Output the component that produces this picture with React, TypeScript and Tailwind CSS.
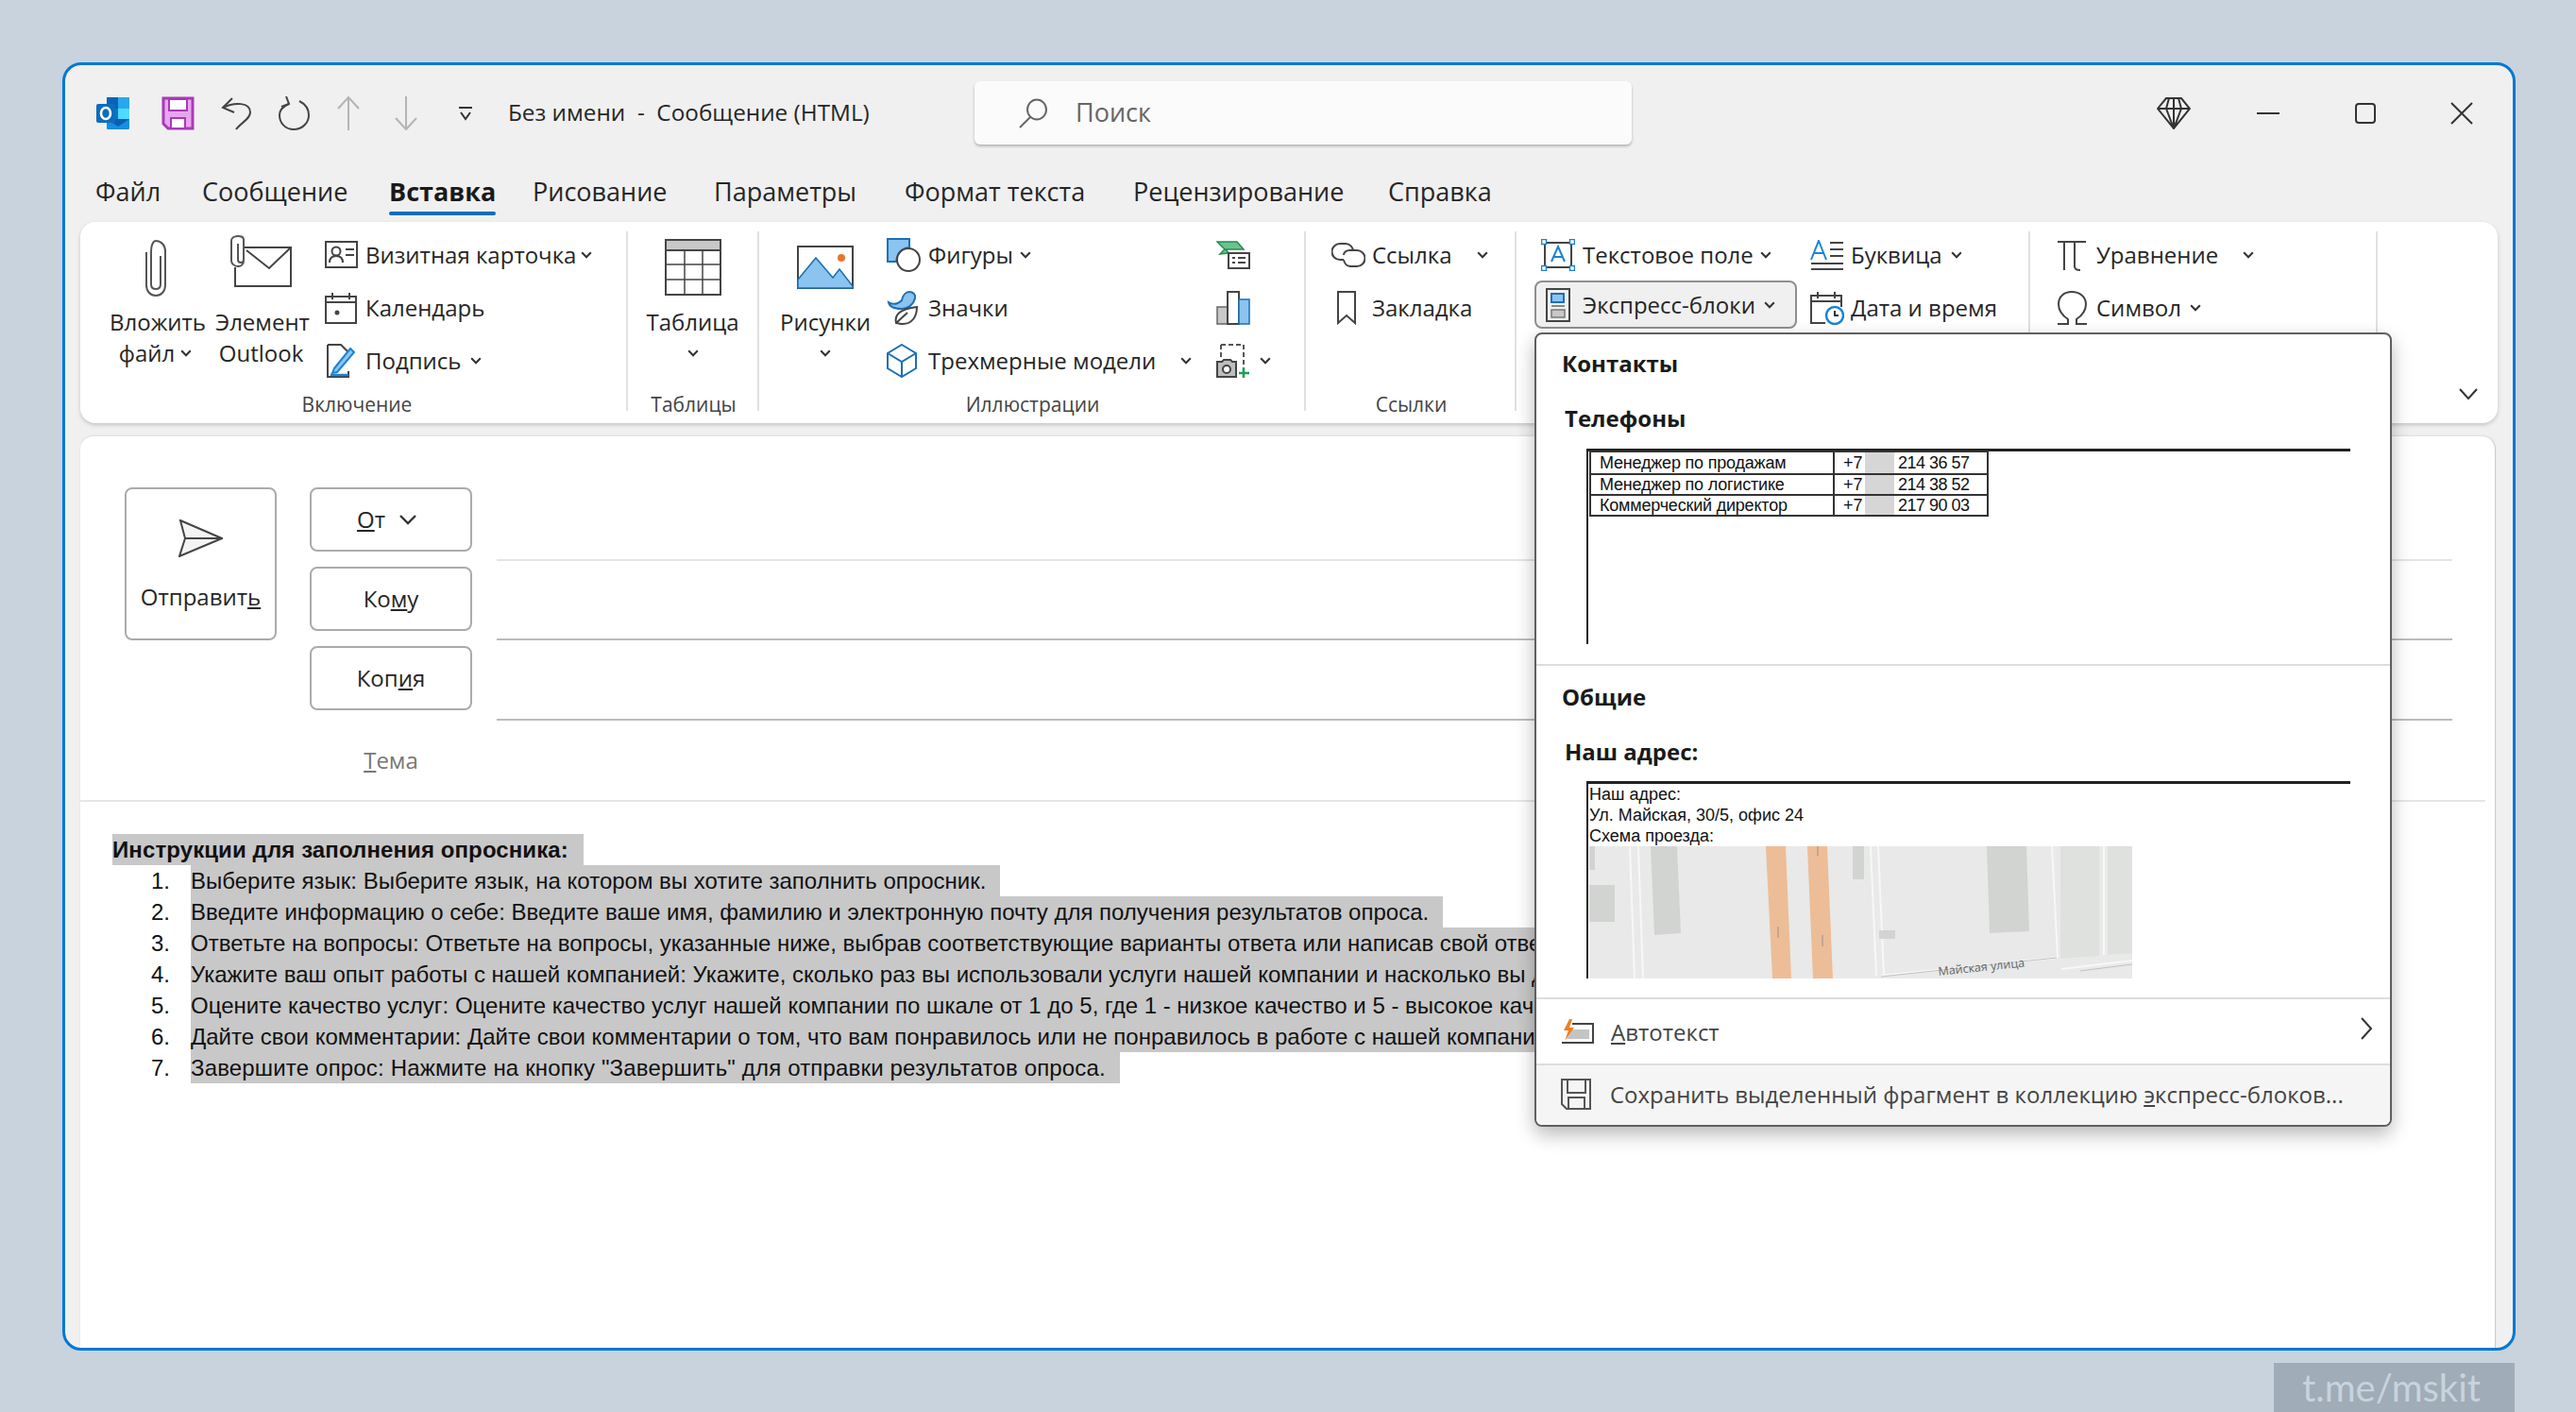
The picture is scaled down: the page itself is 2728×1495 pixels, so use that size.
const FONT = "font-['Open_Sans',sans-serif]";

function Chev({ className = '' }: { className?: string }) {
  return (
    <svg width="12" height="8" viewBox="0 0 12 8" className={`shrink-0 ${className}`} fill="none" stroke="#333" strokeWidth="2">
      <path d="M1.2 1.2 6 6.3l4.8-5.1" />
    </svg>
  );
}

const ic = { fill: 'none', stroke: '#444', strokeWidth: 2 };

const OutlookIcon = () => (
  <svg width="36" height="36" viewBox="0 0 36 36">
    <rect x="11" y="1" width="24" height="34" rx="2" fill="#0a5fb4" />
    <rect x="11" y="1" width="12" height="12" fill="#0364b8" />
    <rect x="23" y="1" width="12" height="12" fill="#28a8ea" />
    <rect x="11" y="13" width="12" height="11" fill="#0078d4" />
    <rect x="23" y="13" width="12" height="11" fill="#50d9ff" />
    <path d="M11 24 23 32l12-8v9a2 2 0 0 1-2 2H13a2 2 0 0 1-2-2z" fill="#1490df" />
    <rect x="0" y="8" width="20" height="20" rx="2" fill="#0f6cbd" />
    <ellipse cx="10" cy="18" rx="5" ry="6" fill="none" stroke="#fff" strokeWidth="2.6" />
  </svg>
);
const SaveIcon = () => (
  <svg width="35" height="36" viewBox="0 0 35 36">
    <path d="M2 2h31v32H7l-5-5z" fill="#e8a6ee" stroke="#a939b8" strokeWidth="3" />
    <rect x="8" y="3" width="19" height="12" fill="#fff" stroke="#a939b8" strokeWidth="2" />
    <rect x="10" y="23" width="15" height="11" fill="#fff" stroke="#a939b8" strokeWidth="2" />
  </svg>
);
const UndoIcon = () => (
  <svg width="34" height="36" viewBox="0 0 34 36" {...ic}>
    <path d="M13 2 3 12l12 5" />
    <path d="M3 12C15 6 32 6 32 17c0 7-10 11-15 18" />
  </svg>
);
const RedoIcon = () => (
  <svg width="35" height="36" viewBox="0 0 35 36" {...ic}>
    <path d="M9 0l3 8-8 3" />
    <path d="M12 8C5 11 2 15 2 20c0 9 7 15 15 15s16-6 16-15c0-7-4-12-10-15" />
  </svg>
);
const ArrowV = ({ down }: { down?: boolean }) => (
  <svg width="26" height="36" viewBox="0 0 26 36" fill="none" stroke="#b4b4b4" strokeWidth="2">
    {down ? <path d="M13 0v34M2 23l11 12 11-12" /> : <path d="M13 36V2M2 13 13 1l11 12" />}
  </svg>
);
const QatMore = () => (
  <svg width="16" height="16" viewBox="0 0 16 16" fill="none" stroke="#333" strokeWidth="2">
    <path d="M1 2h14M3 7l5 7 5-7" />
  </svg>
);
const SearchIcon = () => (
  <svg width="32" height="32" viewBox="0 0 32 32" fill="none" stroke="#666" strokeWidth="2">
    <ellipse cx="20" cy="12" rx="10" ry="10.5" />
    <path d="M13 20 2 31" />
  </svg>
);
const Diamond = () => (
  <svg width="36" height="34" viewBox="0 0 36 34" fill="none" stroke="#333" strokeWidth="2">
    <path d="M10 1h16l9 11-17 21L1 12zM1 12h34M13 1l-3 11 8 21 8-21-3-11M18 1v32" />
  </svg>
);
const ClipIcon = () => (
  <svg width="24" height="62" viewBox="0 0 24 62" fill="none" stroke="#555" strokeWidth="2">
    <path d="M17 18v30c0 3-2 5-5 5s-5-2-5-5V13c0-6 2-11 5-11 6 0 10 5 10 11v36c0 6-4 11-10 11S2 55 2 49V14" />
  </svg>
);
const MailClipIcon = () => (
  <svg width="68" height="56" viewBox="0 0 68 56" fill="none" stroke="#444" strokeWidth="2">
    <path d="M16 13h49v41H6V34" />
    <path d="M18 16l24 19 23-22" />
    <path d="M9 9v17c0 2 1 3 3 3s3-1 3-3V5c0-2-2-4-6-4S2 3 2 6v21c0 3 3 6 7 6s6-3 6-6" stroke="#555" />
  </svg>
);
const CardIcon = () => (
  <svg width="35" height="30" viewBox="0 0 35 30" fill="none" stroke="#444" strokeWidth="2">
    <rect x="1" y="1" width="33" height="27" />
    <circle cx="12" cy="11" r="4.5" />
    <path d="M5 23c0-5 3-7 7-7s7 2 7 7M22 9h9M22 15h9" />
  </svg>
);
const CalIcon = () => (
  <svg width="34" height="34" viewBox="0 0 34 34" fill="none" stroke="#444" strokeWidth="2">
    <rect x="1" y="5" width="32" height="28" />
    <path d="M1 11h32M8 1v7M26 1v7" />
    <circle cx="13" cy="22" r="1.5" fill="#444" />
  </svg>
);
const SignIcon = () => (
  <svg width="32" height="36" viewBox="0 0 32 36" fill="none">
    <path d="M3 1h14l7 7v4M3 1v34h22v-6" stroke="#444" strokeWidth="2" />
    <path d="M10 26 27 5l4 4-18 21-5 1z" fill="#8fc6ee" stroke="#1b83d4" strokeWidth="2" />
    <path d="M6 33h19" stroke="#1b83d4" strokeWidth="2.5" />
  </svg>
);
const TableIcon = () => (
  <svg width="60" height="60" viewBox="0 0 60 60" fill="none" stroke="#444" strokeWidth="2">
    <rect x="1" y="1" width="58" height="58" fill="#fff" />
    <rect x="1" y="1" width="58" height="11" fill="#c8c8c8" />
    <path d="M21 12v47M40 12v47M1 27h58M1 43h58" strokeWidth="1.5" />
  </svg>
);
const PictureIcon = () => (
  <svg width="60" height="46" viewBox="0 0 60 46">
    <rect x="1" y="1" width="58" height="44" fill="#fff" stroke="#444" strokeWidth="2" />
    <path d="M1 36 20 13l18 21 7-9 14 18v2H1z" fill="#8cc4f0" stroke="#1b6fb5" strokeWidth="1.5" />
    <circle cx="47" cy="13" r="4" fill="#e8762c" />
  </svg>
);
const ShapesIcon = () => (
  <svg width="36" height="36" viewBox="0 0 36 36">
    <path d="M1 1h23v9C14 11 11 18 10 25H1z" fill="#8cc4f0" stroke="#1b6fb5" strokeWidth="2" />
    <circle cx="23" cy="23" r="12" fill="#fff" stroke="#444" strokeWidth="2" />
  </svg>
);
const IconsIcon = () => (
  <svg width="36" height="36" viewBox="0 0 36 36" fill="none">
    <path d="M2 12c5 3 10 2 14-2 1-5 4-9 8-9s7 3 6 7c-2 7-8 11-14 11C8 19 3 17 2 12z" fill="#8cc4f0" stroke="#1b6fb5" strokeWidth="2" />
    <path d="M10 34c-2-8 3-15 22-17 0 10-5 18-15 18-3 0-5-1-7-1zM10 34 22 23" fill="#fff" stroke="#444" strokeWidth="2" />
  </svg>
);
const CubeIcon = () => (
  <svg width="32" height="36" viewBox="0 0 32 36" fill="none" stroke="#1b6fb5" strokeWidth="2">
    <path d="M16 1 31 10v16L16 35 1 26V10zM1 10l15 9 15-9M16 19v16" />
  </svg>
);
const SmartIcon = () => (
  <svg width="36" height="30" viewBox="0 0 36 30">
    <path d="M1 1h21l7 8H10l3 4-9 1 5-5z" fill="#6cc28d" stroke="#1f8f4e" strokeWidth="1.5" />
    <rect x="13" y="13" width="22" height="16" fill="#fff" stroke="#444" strokeWidth="2" />
    <path d="M17 18h3M23 18h8M17 23h3M23 23h8" stroke="#444" strokeWidth="2" />
  </svg>
);
const ChartIcon = () => (
  <svg width="36" height="36" viewBox="0 0 36 36">
    <rect x="1" y="17" width="11" height="18" fill="#c8c8c8" stroke="#666" strokeWidth="1.5" />
    <rect x="12" y="1" width="12" height="34" fill="#fff" stroke="#444" strokeWidth="2" />
    <rect x="24" y="9" width="11" height="26" fill="#8cc4f0" stroke="#1b6fb5" strokeWidth="1.5" />
  </svg>
);
const ShotIcon = () => (
  <svg width="36" height="36" viewBox="0 0 36 36" fill="none">
    <path d="M5 1h24v22" stroke="#555" strokeWidth="2" strokeDasharray="5 3" />
    <path d="M5 1v15" stroke="#555" strokeWidth="2" strokeDasharray="5 3" />
    <path d="M1 19h5l2-2h7l2 2h4v16H1z" fill="#bdbdbd" stroke="#444" strokeWidth="2" />
    <circle cx="11" cy="27" r="4" fill="#fff" stroke="#444" strokeWidth="2" />
    <path d="M29 25v11M24 31h11" stroke="#1f9d55" strokeWidth="2.5" />
  </svg>
);
const LinkIcon = () => (
  <svg width="36" height="28" viewBox="0 0 36 28" fill="none" stroke="#444" strokeWidth="2">
    <path d="M13 19H9A8 8 0 0 1 9 2h6a8 8 0 0 1 8 8" />
    <path d="M13 14c0-3 3-5 6-5h8a8 8 0 0 1 0 17h-7a8 8 0 0 1-7-7" />
  </svg>
);
const BookmarkIcon = () => (
  <svg width="22" height="36" viewBox="0 0 22 36" fill="none" stroke="#444" strokeWidth="2">
    <path d="M2 1h18v33l-9-8-9 8z" />
  </svg>
);
const TextBoxIcon = () => (
  <svg width="36" height="34" viewBox="0 0 36 34" fill="none">
    <rect x="4" y="4" width="28" height="26" stroke="#444" strokeWidth="2" />
    <path d="M11 24 18 8l7 16M13 19h10" stroke="#1b83d4" strokeWidth="2" />
    {[[3, 3], [33, 3], [3, 31], [33, 31]].map(([x, y]) => (
      <rect key={`${x}-${y}`} x={x - 2.5} y={y - 2.5} width="5" height="5" fill="#fff" stroke="#1b83d4" strokeWidth="1.5" />
    ))}
  </svg>
);
const DropCapIcon = () => (
  <svg width="36" height="32" viewBox="0 0 36 32" fill="none">
    <path d="M1 21 9 1l8 20M4 14h10" stroke="#1b83d4" strokeWidth="2" />
    <path d="M21 3h14M21 10h14M21 17h14M1 25h34M1 31h34" stroke="#444" strokeWidth="2" />
  </svg>
);
const QuickIcon = () => (
  <svg width="26" height="36" viewBox="0 0 26 36" fill="none">
    <rect x="1" y="1" width="24" height="34" stroke="#444" strokeWidth="2" />
    <rect x="6" y="6" width="13" height="9" fill="#8cc4f0" stroke="#1b6fb5" strokeWidth="2" />
    <path d="M6 19h14" stroke="#888" strokeWidth="2" />
    <rect x="6" y="23" width="14" height="8" fill="#c8c8c8" stroke="#777" strokeWidth="1.5" />
  </svg>
);
const DateIcon = () => (
  <svg width="36" height="36" viewBox="0 0 36 36" fill="none">
    <path d="M16 34H1V5h32v12M1 11h32M8 1v7M26 1v7" stroke="#444" strokeWidth="2" />
    <circle cx="26" cy="26" r="9" fill="#fff" stroke="#1b83d4" strokeWidth="2.5" />
    <path d="M26 21v5h4" stroke="#333" strokeWidth="2" />
  </svg>
);
const PiIcon = () => (
  <svg width="32" height="34" viewBox="0 0 32 34" fill="none" stroke="#444" strokeWidth="2">
    <path d="M1 3h30M8 3v30M19 3v26c0 3 2 4 6 4" />
  </svg>
);
const OmegaIcon = () => (
  <svg width="33" height="36" viewBox="0 0 33 36" fill="none" stroke="#444" strokeWidth="2">
    <path d="M1 35h11v-5C6 26 2 20 2 14 2 6 8 1 16 1s15 5 15 13c0 6-4 12-10 16v5h11" />
  </svg>
);
const SendIcon = () => (
  <svg width="47" height="40" viewBox="0 0 47 40" fill="#f4f4f4" stroke="#444" strokeWidth="2">
    <path d="M2 1 46 20 1 39l6-19z" />
    <path d="M7 20h39" />
  </svg>
);
const AutoTextIcon = () => (
  <svg width="35" height="27" viewBox="0 0 35 27" fill="none">
    <path d="M12 5h22v20H1" stroke="#444" strokeWidth="2" />
    <path d="M10 11h20v10H6z" fill="#c4c4c4" />
    <path d="M9 0 3 12h5L4 23 14 9H9l3-9z" fill="#ee7f1e" />
  </svg>
);
const FloppyIcon = () => (
  <svg width="32" height="33" viewBox="0 0 32 33" fill="none" stroke="#555" strokeWidth="2">
    <path d="M1 1h30v31H6l-5-5z" />
    <path d="M7 1v14h19V1M8 32V20h17v12" />
  </svg>
);

function SmallBtn({ icon, label, chev, iconW, chevGap }: { icon: React.ReactNode; label: string; chev?: boolean; iconW: string; chevGap: string }) {
  return (
    <div className="flex h-[56px] items-center whitespace-nowrap">
      <div className={`flex shrink-0 items-center ${iconW}`}>{icon}</div>
      <span>{label}</span>
      {chev && <Chev className={chevGap} />}
    </div>
  );
}

function GroupLabel({ children, pad = 'pl-[2px]' }: { children: string; pad?: string }) {
  return <div className={`-mb-[7px] h-[28px] text-center text-[21px] leading-[28px] text-[#444] ${pad}`}>{children}</div>;
}

const TABS = [
  { t: 'Файл', w: 'w-[113px]' },
  { t: 'Сообщение', w: 'w-[198px]' },
  { t: 'Вставка', w: 'w-[152px]', active: true },
  { t: 'Рисование', w: 'w-[192px]' },
  { t: 'Параметры', w: 'w-[202px]' },
  { t: 'Формат текста', w: 'w-[242px]' },
  { t: 'Рецензирование', w: 'w-[270px]' },
  { t: 'Справка', w: 'w-[120px]' },
];

const STEPS = [
  { text: 'Выберите язык: Выберите язык, на котором вы хотите заполнить опросник.', cls: '' },
  { text: 'Введите информацию о себе: Введите ваше имя, фамилию и электронную почту для получения результатов опроса.', cls: '' },
  { text: 'Ответьте на вопросы: Ответьте на вопросы, указанные ниже, выбрав соответствующие варианты ответа или написав свой ответ.', cls: '' },
  { text: 'Укажите ваш опыт работы с нашей компанией: Укажите, сколько раз вы использовали услуги нашей компании и насколько вы довольны.', cls: '' },
  { text: 'Оцените качество услуг: Оцените качество услуг нашей компании по шкале от 1 до 5, где 1 - низкое качество и 5 - высокое качество.', cls: '' },
  { text: 'Дайте свои комментарии: Дайте свои комментарии о том, что вам понравилось или не понравилось в работе с нашей компанией.', cls: '' },
  { text: 'Завершите опрос: Нажмите на кнопку "Завершить" для отправки результатов опроса.', cls: 'tracking-[0.17px]' },
];

const PHONES = [
  ['Менеджер по продажам', '214 36 57'],
  ['Менеджер по логистике', '214 38 52'],
  ['Коммерческий директор', '217 90 03'],
];

function MapPreview() {
  return (
    <svg width="575" height="140" viewBox="0 0 575 140" className="block">
      <rect width="575" height="140" fill="#e8e9e8" />
      <path d="M43 0l5 140M52 0l5 140M298 0l6 137M306 0l6 137M490 0l6 118M545 0v115M309 137l186-19M500 130l75-9" stroke="#f7f7f7" strokeWidth="2" fill="none" />
      <path d="M309 138l186-20M520 132l55-7" stroke="#bfc1bf" strokeWidth="1" fill="none" />
      <path d="M65 0h28l4 92-28 2zM0 41h27v39H0zM279 0h12v35h-12zM421 0h42l3 90-42 2zM307 89h17v9h-17zM0 0h6v25H0z" fill="#d2d4d1" />
      <path d="M499 0h41v116l-41 3zM549 0h26v113l-26 2z" fill="#dfe1df" />
      <path d="M187 0h21l6 140h-20zM231 0h21l6 140h-21z" fill="#edbd97" />
      <path d="M200 85v12M247 106v-12M242 10V0" stroke="#b5a08f" strokeWidth="1.5" />
      <text x="370" y="137" transform="rotate(-6 370 137)" fontSize="12.5" fill="#666" fontFamily="Open Sans, sans-serif">Майская улица</text>
    </svg>
  );
}

export default function App() {
  return (
    <div className={`flex h-[1495px] w-[2728px] flex-col overflow-hidden bg-[#c8d3de] pl-[66px] pt-[66px] text-[#262626] ${FONT}`}>
      <div className="relative flex h-[1364px] w-[2598px] shrink-0 flex-col rounded-[20px] border-[3px] border-[#0078d4] bg-[#f0f0f0]">
        {/* Title bar */}
        <div className="flex h-[101px] shrink-0 items-center pl-[33px] pr-[42px] text-[24.3px]">
          <OutlookIcon />
          <div className="ml-[33px] flex items-center gap-[27px]">
            <SaveIcon />
            <UndoIcon />
            <RedoIcon />
            <ArrowV />
            <div className="ml-[8px]"><ArrowV down /></div>
          </div>
          <div className="ml-[42px]"><QatMore /></div>
          <div className="ml-[37px] w-[494px] whitespace-pre">Без имени  -  Сообщение (HTML)</div>
          <div className="flex h-[67px] w-[696px] items-center rounded-[6px] bg-[#fbfbfb] pl-[46px] text-[27px] text-[#666] shadow-[0_2px_3px_rgba(0,0,0,0.25)]">
            <SearchIcon />
            <span className="ml-[29px]">Поиск</span>
          </div>
          <div className="ml-[556px]"><Diamond /></div>
          <svg width="24" height="4" viewBox="0 0 24 4" className="ml-[70px]"><path d="M0 2h24" stroke="#333" strokeWidth="2" /></svg>
          <svg width="24" height="24" viewBox="0 0 24 24" className="ml-[79px]" fill="none" stroke="#333" strokeWidth="2"><rect x="2" y="2" width="20" height="20" rx="3" /></svg>
          <svg width="24" height="24" viewBox="0 0 24 24" className="ml-[78px]" fill="none" stroke="#333" strokeWidth="2"><path d="M1 1l22 22M23 1 1 23" /></svg>
        </div>

        {/* Tabs */}
        <div className="flex h-[65px] shrink-0 pl-[32px] text-[27px]">
          {TABS.map(tab => (
            <div key={tab.t} className={`${tab.w} shrink-0 whitespace-nowrap`}>
              <div className={`relative inline-block leading-[66px] ${tab.active ? 'font-bold text-[#1a1a1a]' : ''}`}>
                {tab.t}
                {tab.active && <div className="absolute bottom-[8px] left-0 right-0 h-[4px] rounded-full bg-[#0f6cbd]" />}
              </div>
            </div>
          ))}
        </div>

        {/* Ribbon */}
        <div className="mx-[16px] flex h-[213px] shrink-0 rounded-[16px] bg-white pb-[13px] pt-[10px] text-[24px] shadow-[0_2px_4px_rgba(0,0,0,0.18)]">
          {/* Включение */}
          <div className="flex w-[580px] shrink-0 flex-col justify-between border-r-2 border-[#e1e1e1]">
            <div className="flex pl-[31px]">
              <div className="w-[97px] text-center leading-[33px]">
                <div className="flex h-[79px] justify-center pt-[8px]"><ClipIcon /></div>
                <div>Вложить</div>
                <div className="flex items-center justify-center gap-[6px]">файл <Chev /></div>
              </div>
              <div className="ml-[15px] w-[97px] text-center leading-[33px]">
                <div className="flex h-[79px] justify-center pt-[4px]"><MailClipIcon /></div>
                <div>Элемент</div>
                <div>Outlook</div>
              </div>
              <div className="-mt-[3px] ml-[19px]">
                <SmallBtn icon={<CardIcon />} label="Визитная карточка" chev iconW="w-[43px]" chevGap="ml-[5px]" />
                <SmallBtn icon={<CalIcon />} label="Календарь" iconW="w-[43px]" chevGap="" />
                <SmallBtn icon={<SignIcon />} label="Подпись" chev iconW="w-[43px]" chevGap="ml-[9px]" />
              </div>
            </div>
            <GroupLabel pad="pl-[8px]">Включение</GroupLabel>
          </div>
          {/* Таблицы */}
          <div className="flex w-[139px] shrink-0 flex-col justify-between border-r-2 border-[#e1e1e1]">
            <div className="text-center leading-[33px]">
              <div className="flex h-[79px] justify-center pt-[8px]"><TableIcon /></div>
              <div>Таблица</div>
              <div className="flex h-[33px] items-center justify-center"><Chev /></div>
            </div>
            <GroupLabel>Таблицы</GroupLabel>
          </div>
          {/* Иллюстрации */}
          <div className="flex w-[579px] shrink-0 flex-col justify-between border-r-2 border-[#e1e1e1]">
            <div className="flex pl-[22px]">
              <div className="w-[96px] text-center leading-[33px]">
                <div className="flex h-[79px] justify-center pt-[15px]"><PictureIcon /></div>
                <div>Рисунки</div>
                <div className="flex h-[33px] items-center justify-center"><Chev /></div>
              </div>
              <div className="-mt-[3px] ml-[17px] w-[349px]">
                <SmallBtn icon={<ShapesIcon />} label="Фигуры" chev iconW="w-[44px]" chevGap="ml-[7px]" />
                <SmallBtn icon={<IconsIcon />} label="Значки" iconW="w-[44px]" chevGap="" />
                <SmallBtn icon={<CubeIcon />} label="Трехмерные модели" chev iconW="w-[44px]" chevGap="ml-[26px]" />
              </div>
              <div className="-mt-[3px]">
                <div className="flex h-[56px] items-center"><SmartIcon /></div>
                <div className="flex h-[56px] items-center"><ChartIcon /></div>
                <div className="flex h-[56px] items-center gap-[10px]"><ShotIcon /><Chev /></div>
              </div>
            </div>
            <GroupLabel>Иллюстрации</GroupLabel>
          </div>
          {/* Ссылки */}
          <div className="flex w-[223px] shrink-0 flex-col justify-between border-r-2 border-[#e1e1e1]">
            <div className="-mt-[3px] pl-[27px]">
              <SmallBtn icon={<LinkIcon />} label="Ссылка" chev iconW="w-[43px]" chevGap="ml-[26px]" />
              <SmallBtn icon={<div className="pl-[5px]"><BookmarkIcon /></div>} label="Закладка" iconW="w-[43px]" chevGap="" />
            </div>
            <GroupLabel>Ссылки</GroupLabel>
          </div>
          {/* Текст */}
          <div className="flex w-[544px] shrink-0 flex-col justify-between border-r-2 border-[#e1e1e1]">
            <div className="-mt-[3px] flex pl-[19px]">
              <div className="w-[292px]">
                <div className="ml-[7px]">
                  <SmallBtn icon={<TextBoxIcon />} label="Текстовое поле" chev iconW="w-[44px]" chevGap="ml-[7px]" />
                </div>
                <div className="-mt-[1px] flex h-[51px] w-[278px] items-center rounded-[8px] border-2 border-[#8f8f8f] bg-[#f0f0f0] pl-[10px] whitespace-nowrap">
                  <QuickIcon />
                  <span className="ml-[13px]">Экспресс-блоки</span>
                  <Chev className="ml-[9px]" />
                </div>
              </div>
              <div>
                <SmallBtn icon={<DropCapIcon />} label="Буквица" chev iconW="w-[43px]" chevGap="ml-[9px]" />
                <SmallBtn icon={<DateIcon />} label="Дата и время" iconW="w-[43px]" chevGap="" />
              </div>
            </div>
          </div>
          {/* Символы */}
          <div className="flex w-[368px] shrink-0 flex-col justify-between border-r-2 border-[#e1e1e1]">
            <div className="-mt-[3px] pl-[28px]">
              <SmallBtn icon={<PiIcon />} label="Уравнение" chev iconW="w-[42px]" chevGap="ml-[26px]" />
              <SmallBtn icon={<OmegaIcon />} label="Символ" chev iconW="w-[42px]" chevGap="ml-[9px]" />
            </div>
          </div>
          <div className="flex flex-1 items-end justify-end pb-[12px] pr-[21px]">
            <svg width="20" height="12" viewBox="0 0 20 12" fill="none" stroke="#333" strokeWidth="2"><path d="M1 1l9 10 9-10" /></svg>
          </div>
        </div>

        {/* Compose */}
        <div className="ml-[16px] mr-[18px] mt-[14px] flex min-h-0 flex-1 flex-col overflow-hidden rounded-t-[14px] border-r border-[#cccccc] bg-white shadow-[0_-1px_2px_rgba(0,0,0,0.08)]">
          <div className="mr-[10px] flex h-[387px] shrink-0 border-b-2 border-[#e6e6e6] pl-[47px] pt-[54px] text-[24px]">
            <div className="flex h-[162px] w-[161px] shrink-0 flex-col items-center rounded-[8px] border-2 border-[#ababab]">
              <div className="mt-[32px]"><SendIcon /></div>
              <div className="mt-[25px] leading-[33px]">Отправит<u className="underline-offset-2">ь</u></div>
            </div>
            <div className="ml-[35px] flex w-[172px] shrink-0 flex-col gap-[16px]">
              <div className="flex h-[68px] items-center justify-center gap-[14px] rounded-[8px] border-2 border-[#ababab] pr-[8px]">
                <span><u className="underline-offset-2">О</u>т</span>
                <svg width="20" height="12" viewBox="0 0 20 12" fill="none" stroke="#333" strokeWidth="2.4"><path d="M2 2l8 8 8-8" /></svg>
              </div>
              <div className="flex h-[68px] items-center justify-center rounded-[8px] border-2 border-[#ababab]">
                <span>Ко<u className="underline-offset-2">м</u>у</span>
              </div>
              <div className="flex h-[68px] items-center justify-center rounded-[8px] border-2 border-[#ababab]">
                <span>Коп<u className="underline-offset-2">и</u>я</span>
              </div>
              <div className="mt-[20px] text-center leading-[33px] text-[#777]"><u className="underline-offset-2">Т</u>ема</div>
            </div>
            <div className="ml-[26px] w-[2071px] shrink-0">
              <div className="h-[78px] border-b-2 border-[#e4e4e4]" />
              <div className="h-[84px] border-b-2 border-[#bcbcbc]" />
              <div className="h-[85px] border-b-2 border-[#bcbcbc]" />
            </div>
          </div>
          <div className="overflow-hidden whitespace-nowrap pl-[34px] pt-[34px] font-['Liberation_Sans',sans-serif] text-[24px] leading-[33px] text-[#111]">
            <div className="inline-block bg-[#c8c8c8] pr-[16px] font-bold tracking-[0.1px]">Инструкции для заполнения опросника:</div>
            {STEPS.map((s, i) => (
              <div key={i} className="flex">
                <div className="w-[83px] shrink-0 pl-[41px]">{i + 1}.</div>
                <div className={`bg-[#c8c8c8] pr-[15px] ${s.cls}`}>{s.text}</div>
              </div>
            ))}
          </div>
        </div>

        {/* Quick parts menu */}
        <div className="absolute left-[1556px] top-[283px] flex h-[841px] w-[908px] flex-col overflow-hidden rounded-[8px] border-2 border-[#5f5f5f] bg-white text-[#1a1a1a] shadow-[0_8px_20px_rgba(0,0,0,0.28)]">
          <div className="h-[351px] shrink-0 border-b-2 border-[#dddddd] pl-[27px] pt-[14px]">
            <div className="text-[24px] font-bold leading-[34px]">Контакты</div>
            <div className="ml-[3px] mt-[24px] text-[24px] font-bold leading-[34px]">Телефоны</div>
            <div className="ml-[26px] mt-[15px] h-[207px] w-[809px] border-l-2 border-t-[3px] border-[#222222] pl-px font-['Liberation_Sans',sans-serif] text-[18px] text-[#111]">
              <div className="-mt-px w-[423px] border-2 border-[#333333]">
                {PHONES.map((p, i) => (
                  <div key={p[1]} className={`flex h-[22px] items-center ${i > 0 ? 'border-t-2 border-[#333333]' : ''}`}>
                    <div className="flex h-full w-[258px] items-center overflow-hidden whitespace-nowrap border-r-2 border-[#333333] pl-[9px] tracking-[-0.2px]">{p[0]}</div>
                    <div className="ml-[9px] w-[23px]">+7</div>
                    <div className="h-full w-[31px] bg-[#d6d6d6]" />
                    <div className="ml-[4px] whitespace-nowrap tracking-[-0.5px]">{p[1]}</div>
                  </div>
                ))}
              </div>
            </div>
          </div>
          <div className="h-[353px] shrink-0 border-b-2 border-[#dddddd] pl-[27px] pt-[16px]">
            <div className="text-[24px] font-bold leading-[34px]">Общие</div>
            <div className="ml-[3px] mt-[24px] text-[24px] font-bold leading-[34px]">Наш адрес:</div>
            <div className="ml-[26px] mt-[14px] h-[209px] w-[809px] border-l-2 border-t-[3px] border-[#222222] pl-px font-['Liberation_Sans',sans-serif] text-[18px] leading-[22px] text-[#111]">
              <div>Наш адрес:</div>
              <div>Ул. Майская, 30/5, офис 24</div>
              <div>Схема проезда:</div>
              <MapPreview />
            </div>
          </div>
          <div className="flex h-[68px] shrink-0 items-center pl-[26px] pr-[18px] text-[24px] text-[#444]">
            <AutoTextIcon />
            <span className="ml-[18px] mt-[2px]"><u className="underline-offset-2">А</u>втотекст</span>
            <svg width="14" height="24" viewBox="0 0 14 24" className="ml-auto -mt-[6px]" fill="none" stroke="#333" strokeWidth="2"><path d="M2 1l10 11L2 23" /></svg>
          </div>
          <div className="flex flex-1 items-center border-t-2 border-[#dddddd] bg-[#f5f5f5] pb-[2px] pl-[26px] text-[24px] text-[#444]">
            <FloppyIcon />
            <span className="ml-[20px] whitespace-nowrap">Сохранить выделенный фрагмент в коллекцию <u className="underline-offset-2">э</u>кспресс-блоков...</span>
          </div>
        </div>
      </div>

      {/* Watermark */}
      <div className="ml-[2342px] mt-[13px] flex h-[52px] w-[255px] shrink-0 items-center justify-center bg-[#a0acb7] pr-[6px] font-['Lato',sans-serif] text-[40px] font-normal text-[#c8d3de]">
        t.me/mskit
      </div>
    </div>
  );
}
